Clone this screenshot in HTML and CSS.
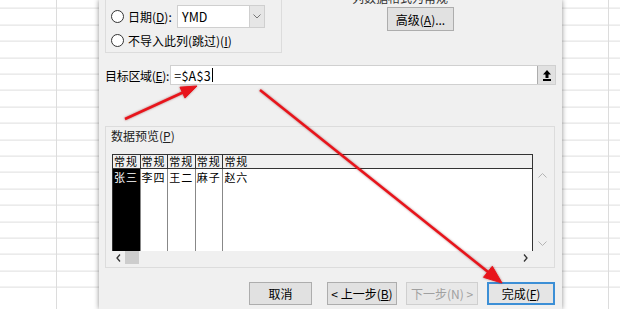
FILE: index.html
```html
<!DOCTYPE html>
<html lang="zh-CN">
<head>
    <meta charset="UTF-8">
    <title>文本导入向导</title>
    <link rel="stylesheet" href="styles.css">
</head>
<body>
    <div class="screen">
        <div class="sheet sheet-left"></div>

        <div class="dialog">
            <div class="top">
                <div class="group-format">
                    <div class="radio-row">
                        <span class="radio"></span>
                        <span class="radio-label">日期(<u>D</u>):</span>
                        <div class="select">
                            <span>YMD</span>
                            <span class="drop">
                                <svg width="8" height="5" viewBox="0 0 8 5"><path d="M0.5 0.5 L4 4 L7.5 0.5" fill="none" stroke="#777" stroke-width="1"/></svg>
                            </span>
                        </div>
                    </div>
                    <div class="radio-row second">
                        <span class="radio"></span>
                        <span>不导入此列(跳过)(<u>I</u>)</span>
                    </div>
                </div>
                <div class="top-right">
                    <div class="cut-text">列数据格式为常规</div>
                    <button class="btn btn-adv">高级(<u>A</u>)...</button>
                </div>
            </div>

            <div class="dest-row">
                <span class="dest-label">目标区域(<u>E</u>):</span>
                <div class="dest-input">
                    <span class="dest-value">=$A$3</span><span class="caret"></span>
                    <span class="collapse-btn">
                        <svg width="8" height="11" viewBox="0 0 8 11"><path d="M4 0 L8 4.5 L5.5 4.5 L5.5 8 L2.5 8 L2.5 4.5 L0 4.5 Z" fill="#000"/><rect x="0" y="9" width="8" height="2" fill="#000"/></svg>
                    </span>
                </div>
            </div>

            <div class="preview">
                <div class="legend">数据预览(<u>P</u>)</div>
                <div class="preview-body">
                    <div class="grid-wrap">
                        <div class="grid">
                            <div class="grid-head">
                                <span class="col">常规</span>
                                <span class="col">常规</span>
                                <span class="col">常规</span>
                                <span class="col">常规</span>
                                <span class="col last">常规</span>
                            </div>
                            <div class="grid-data">
                                <span class="col selected">张三</span>
                                <span class="col">李四</span>
                                <span class="col">王二</span>
                                <span class="col">麻子</span>
                                <span class="col last">赵六</span>
                            </div>
                        </div>
                        <div class="vscroll">
                            <span class="arr">
                                <svg width="9" height="5" viewBox="0 0 9 5"><path d="M0.5 4.5 L4.5 0.5 L8.5 4.5" fill="none" stroke="#b4b4b4" stroke-width="1"/></svg>
                            </span>
                            <span class="arr">
                                <svg width="9" height="5" viewBox="0 0 9 5"><path d="M0.5 0.5 L4.5 4.5 L8.5 0.5" fill="none" stroke="#b4b4b4" stroke-width="1"/></svg>
                            </span>
                        </div>
                    </div>
                    <div class="hscroll">
                        <span class="harr">
                            <svg width="5" height="8" viewBox="0 0 5 8"><path d="M4 0.5 L1 4 L4 7.5" fill="none" stroke="#333" stroke-width="1.3"/></svg>
                        </span>
                        <span class="thumb"></span>
                        <span class="harr right">
                            <svg width="5" height="8" viewBox="0 0 5 8"><path d="M1 0.5 L4 4 L1 7.5" fill="none" stroke="#333" stroke-width="1.3"/></svg>
                        </span>
                    </div>
                </div>
            </div>

            <div class="buttons">
                <button class="btn btn-cancel">取消</button>
                <button class="btn btn-prev">&lt; 上一步(<u>B</u>)</button>
                <button class="btn btn-next" disabled>下一步(N) &gt;</button>
                <button class="btn btn-finish">完成(<u>F</u>)</button>
            </div>
        </div>

        <div class="sheet sheet-right"></div>

        <!-- 红色标注箭头 -->
        <svg class="arrows" width="620" height="309" viewBox="0 0 620 309">
            <g fill="#e8141b" stroke="#e8141b">
                <line x1="125" y1="119" x2="185" y2="91.5" stroke-width="2.5"/>
                <polygon points="197,86 185,98.1 180,87.2" stroke-width="1"/>
                <line x1="260" y1="90" x2="490" y2="273.5" stroke-width="2.5"/>
                <polygon points="502,283 483.5,277.3 492.3,266.3" stroke-width="1"/>
            </g>
        </svg>
    </div>
</body>
</html>
```

FILE: styles.css
```css
body {
    margin: 0;
    padding: 0;
    font-family: "Noto Sans CJK SC", "Noto Sans", sans-serif;
    font-size: 12px;
    color: #000;
}
u {
    text-decoration: underline;
    text-underline-offset: 1px;
}
.screen {
    position: relative;
    display: flex;
    width: 620px;
    height: 309px;
    overflow: hidden;
    background: #fff;
}

/* 表格背景 */
.sheet {
    height: 309px;
    background-color: #fff;
    background-image:
        linear-gradient(to right, #dcdcdc, #dcdcdc),
        repeating-linear-gradient(to bottom, #fff 0, #fff 15.4px, #dedede 15.4px, #dedede 16.4px);
    background-repeat: no-repeat, repeat;
}
.sheet-left {
    width: 99px;
    background-size: 1px 100%, 100% 100%;
    background-position: 56px 0, 0 -7.4px;
}
.sheet-right {
    width: 58px;
    background-size: 1px 100%, 100% 100%;
    background-position: 46px 0, 0 -7.4px;
}

/* 对话框 */
.dialog {
    position: relative;
    z-index: 1;
    width: 463px;
    height: 309px;
    background-color: #f0f0f0;
    box-shadow: 0 0 5px rgba(0, 0, 0, 0.45);
    display: flex;
    flex-direction: column;
}
.top {
    display: flex;
    height: 60px;
}
.group-format {
    margin-left: 6px;
    width: 170px;
    height: 52px;
    border: 1px solid #dcdcdc;
    border-top: none;
    padding-left: 5px;
    box-sizing: content-box;
}
.radio-row {
    display: flex;
    align-items: center;
    height: 23px;
    margin-top: 5px;
    white-space: nowrap;
}
.radio-row.second {
    height: 16px;
    margin-top: 4px;
}
.radio {
    width: 11px;
    height: 11px;
    border: 1px solid #333;
    border-radius: 50%;
    background: #fff;
    margin-right: 4px;
}
.radio-label {
    width: 49px;
}
.select {
    display: flex;
    align-items: center;
    justify-content: space-between;
    width: 82px;
    height: 21px;
    border: 1px solid #cfcfcf;
    background: #fff;
    padding-left: 4px;
    box-sizing: content-box;
    font-size: 12.5px;
}
.select .drop {
    display: flex;
    align-items: center;
    justify-content: center;
    width: 14px;
    height: 21px;
    background: #e6e6e6;
    border-left: 1px solid #cfcfcf;
}
.top-right {
    display: flex;
    flex-direction: column;
}
.cut-text {
    margin-left: 70px;
    margin-top: -9px;
    height: 14px;
    line-height: 14px;
    color: #333;
    white-space: nowrap;
}
.btn {
    font-family: "Noto Sans CJK SC", "Noto Sans", sans-serif;
    font-size: 12px;
    color: #000;
    background: #e1e1e1;
    border: 1px solid #adadad;
    padding: 0;
    height: 24px;
    white-space: nowrap;
}
.btn-adv {
    margin-top: 2px;
    margin-left: 105px;
    width: 67px;
}

/* 目标区域 */
.dest-row {
    display: flex;
    align-items: center;
    margin-top: 5px;
    padding-left: 6px;
    padding-right: 6px;
    height: 20px;
}
.dest-label {
    flex-shrink: 0;
    white-space: nowrap;
    letter-spacing: -0.3px;
    margin-right: 1px;
}
.dest-input {
    flex: 1;
    display: flex;
    align-items: center;
    height: 18px;
    border: 1px solid #d0d0d0;
    background: #fff;
    padding-left: 3px;
}
.dest-value {
    font-size: 12.5px;
    letter-spacing: 0.3px;
}
.caret {
    width: 1px;
    height: 14px;
    background: #000;
    margin-left: 1px;
}
.collapse-btn {
    margin-left: auto;
    width: 17px;
    height: 18px;
    display: flex;
    align-items: center;
    justify-content: center;
    background: #e1e1e1;
    border-left: 1px solid #adadad;
}

/* 数据预览 */
.preview {
    margin-top: 41px;
    margin-left: 6px;
    width: 448px;
    height: 140px;
    border: 1px solid #dcdcdc;
}
.legend {
    display: inline-block;
    margin-top: -8px;
    margin-left: 4px;
    padding: 0 1px;
    line-height: 15px;
    background: #f0f0f0;
    color: #222;
}
.preview-body {
    padding-left: 6px;
    margin-top: 10px;
}
.grid-wrap {
    display: flex;
}
.grid {
    width: 421px;
}
.grid-head {
    display: flex;
    height: 13px;
    line-height: 13px;
    border: 1px solid #333;
    background: #f0f0f0;
}
.grid-data {
    display: flex;
    height: 82px;
    border-left: 1px solid #333;
    border-right: 1px solid #333;
    background: #fff;
    line-height: 14px;
}
.col {
    box-sizing: border-box;
    width: 27.6px;
    flex-shrink: 0;
    border-right: 1px solid #333;
    padding-left: 1px;
    white-space: nowrap;
    font-size: 11px;
    letter-spacing: 1px;
}
.grid-data .col {
    border-right-color: #888;
    padding-top: 1px;
}
.col.last {
    flex: 1;
    border-right: none;
}
.col.selected {
    background: #000;
    color: #fff;
}
.vscroll {
    width: 19px;
    margin-top: 14px;
    height: 82px;
    display: flex;
    flex-direction: column;
    justify-content: space-between;
    align-items: center;
    padding: 5px 0 4px;
    box-sizing: border-box;
}
.arr {
    display: flex;
}
.hscroll {
    display: flex;
    align-items: center;
    width: 421px;
    height: 13px;
}
.harr {
    width: 13px;
    display: flex;
    justify-content: center;
}
.harr.right {
    margin-left: auto;
    margin-right: 1px;
}
.thumb {
    width: 14px;
    height: 13px;
    background: #cdcdcd;
}

/* 底部按钮 */
.buttons {
    display: flex;
    margin-top: 14px;
    padding-left: 150px;
}
.buttons .btn {
    height: 23px;
}
.btn-cancel {
    width: 63px;
}
.btn-prev {
    width: 70px;
    margin-left: 15px;
}
.btn-next {
    width: 72px;
    margin-left: 9px;
    color: #a0a0a0;
    border-color: #cfcfcf;
    background: #e8e8e8;
}
.btn-finish {
    width: 68px;
    margin-left: 9px;
    border: 2px solid #3c8fd6;
    background: #e5e5e5;
}

/* 标注 */
.arrows {
    position: absolute;
    left: 0;
    top: 0;
    z-index: 2;
    filter: drop-shadow(0 0 1px rgba(120, 0, 0, 0.5));
}
```
